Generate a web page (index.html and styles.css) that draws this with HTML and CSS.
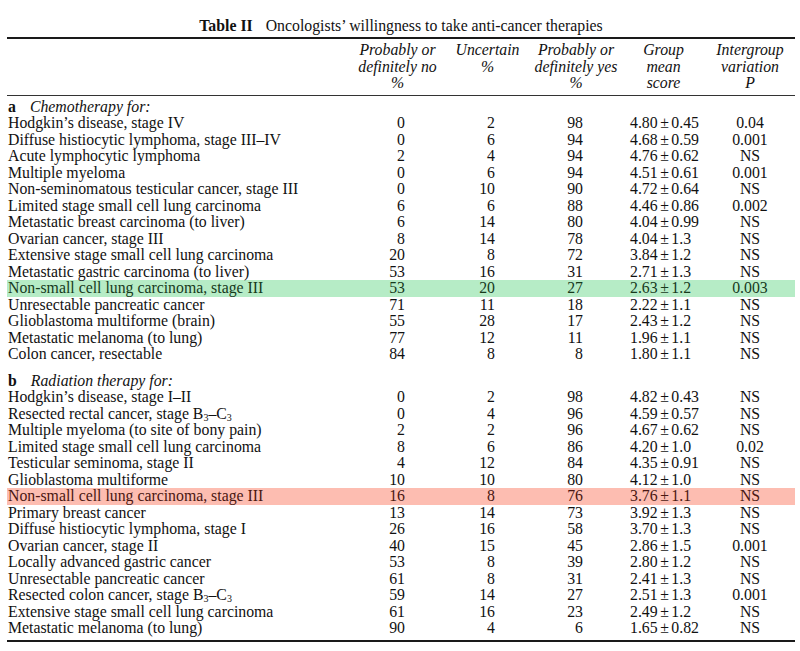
FILE: index.html
```html
<!DOCTYPE html>
<html>
<head>
<meta charset="utf-8">
<link rel="stylesheet" href="styles.css">
</head>
<body>
<div class="page">
  <div class="title"><b>Table II</b><span class="title-text">Oncologists’ willingness to take anti-cancer therapies</span></div>
  <table class="tbl">
    <colgroup>
      <col class="c-label"><col class="c-no"><col class="c-unc"><col class="c-yes"><col class="c-mean"><col class="c-p">
    </colgroup>
    <thead>
      <tr>
        <th></th>
        <th>Probably or<br>definitely no<br>%</th>
        <th>Uncertain<br>%</th>
        <th>Probably or<br>definitely yes<br>%</th>
        <th>Group<br>mean<br>score</th>
        <th>Intergroup<br>variation<br>P</th>
      </tr>
    </thead>
    <tbody>
      <tr class="sec"><td colspan="6"><b>a</b><i>Chemotherapy for:</i></td></tr>
      <tr><td>Hodgkin’s disease, stage IV</td><td>0</td><td>2</td><td>98</td><td>4.80<span class="pm">±</span>0.45</td><td>0.04</td></tr>
      <tr><td>Diffuse histiocytic lymphoma, stage III–IV</td><td>0</td><td>6</td><td>94</td><td>4.68<span class="pm">±</span>0.59</td><td>0.001</td></tr>
      <tr><td>Acute lymphocytic lymphoma</td><td>2</td><td>4</td><td>94</td><td>4.76<span class="pm">±</span>0.62</td><td>NS</td></tr>
      <tr><td>Multiple myeloma</td><td>0</td><td>6</td><td>94</td><td>4.51<span class="pm">±</span>0.61</td><td>0.001</td></tr>
      <tr><td>Non-seminomatous testicular cancer, stage III</td><td>0</td><td>10</td><td>90</td><td>4.72<span class="pm">±</span>0.64</td><td>NS</td></tr>
      <tr><td>Limited stage small cell lung carcinoma</td><td>6</td><td>6</td><td>88</td><td>4.46<span class="pm">±</span>0.86</td><td>0.002</td></tr>
      <tr><td>Metastatic breast carcinoma (to liver)</td><td>6</td><td>14</td><td>80</td><td>4.04<span class="pm">±</span>0.99</td><td>NS</td></tr>
      <tr><td>Ovarian cancer, stage III</td><td>8</td><td>14</td><td>78</td><td>4.04<span class="pm">±</span>1.3</td><td>NS</td></tr>
      <tr><td>Extensive stage small cell lung carcinoma</td><td>20</td><td>8</td><td>72</td><td>3.84<span class="pm">±</span>1.2</td><td>NS</td></tr>
      <tr><td>Metastatic gastric carcinoma (to liver)</td><td>53</td><td>16</td><td>31</td><td>2.71<span class="pm">±</span>1.3</td><td>NS</td></tr>
      <tr class="hl-green"><td>Non-small cell lung carcinoma, stage III</td><td>53</td><td>20</td><td>27</td><td>2.63<span class="pm">±</span>1.2</td><td>0.003</td></tr>
      <tr><td>Unresectable pancreatic cancer</td><td>71</td><td>11</td><td>18</td><td>2.22<span class="pm">±</span>1.1</td><td>NS</td></tr>
      <tr><td>Glioblastoma multiforme (brain)</td><td>55</td><td>28</td><td>17</td><td>2.43<span class="pm">±</span>1.2</td><td>NS</td></tr>
      <tr><td>Metastatic melanoma (to lung)</td><td>77</td><td>12</td><td>11</td><td>1.96<span class="pm">±</span>1.1</td><td>NS</td></tr>
      <tr><td>Colon cancer, resectable</td><td>84</td><td>8</td><td>8</td><td>1.80<span class="pm">±</span>1.1</td><td>NS</td></tr>
      <tr class="sec sec-b"><td colspan="6"><b>b</b><i>Radiation therapy for:</i></td></tr>
      <tr><td>Hodgkin’s disease, stage I–II</td><td>0</td><td>2</td><td>98</td><td>4.82<span class="pm">±</span>0.43</td><td>NS</td></tr>
      <tr><td>Resected rectal cancer, stage B<sub>3</sub>–C<sub>3</sub></td><td>0</td><td>4</td><td>96</td><td>4.59<span class="pm">±</span>0.57</td><td>NS</td></tr>
      <tr><td>Multiple myeloma (to site of bony pain)</td><td>2</td><td>2</td><td>96</td><td>4.67<span class="pm">±</span>0.62</td><td>NS</td></tr>
      <tr><td>Limited stage small cell lung carcinoma</td><td>8</td><td>6</td><td>86</td><td>4.20<span class="pm">±</span>1.0</td><td>0.02</td></tr>
      <tr><td>Testicular seminoma, stage II</td><td>4</td><td>12</td><td>84</td><td>4.35<span class="pm">±</span>0.91</td><td>NS</td></tr>
      <tr><td>Glioblastoma multiforme</td><td>10</td><td>10</td><td>80</td><td>4.12<span class="pm">±</span>1.0</td><td>NS</td></tr>
      <tr class="hl-red"><td>Non-small cell lung carcinoma, stage III</td><td>16</td><td>8</td><td>76</td><td>3.76<span class="pm">±</span>1.1</td><td>NS</td></tr>
      <tr><td>Primary breast cancer</td><td>13</td><td>14</td><td>73</td><td>3.92<span class="pm">±</span>1.3</td><td>NS</td></tr>
      <tr><td>Diffuse histiocytic lymphoma, stage I</td><td>26</td><td>16</td><td>58</td><td>3.70<span class="pm">±</span>1.3</td><td>NS</td></tr>
      <tr><td>Ovarian cancer, stage II</td><td>40</td><td>15</td><td>45</td><td>2.86<span class="pm">±</span>1.5</td><td>0.001</td></tr>
      <tr><td>Locally advanced gastric cancer</td><td>53</td><td>8</td><td>39</td><td>2.80<span class="pm">±</span>1.2</td><td>NS</td></tr>
      <tr><td>Unresectable pancreatic cancer</td><td>61</td><td>8</td><td>31</td><td>2.41<span class="pm">±</span>1.3</td><td>NS</td></tr>
      <tr><td>Resected colon cancer, stage B<sub>3</sub>–C<sub>3</sub></td><td>59</td><td>14</td><td>27</td><td>2.51<span class="pm">±</span>1.3</td><td>0.001</td></tr>
      <tr><td>Extensive stage small cell lung carcinoma</td><td>61</td><td>16</td><td>23</td><td>2.49<span class="pm">±</span>1.2</td><td>NS</td></tr>
      <tr class="last"><td>Metastatic melanoma (to lung)</td><td>90</td><td>4</td><td>6</td><td>1.65<span class="pm">±</span>0.82</td><td>NS</td></tr>
    </tbody>
  </table>
</div>
</body>
</html>
```
FILE: styles.css
```css
html, body {
  margin: 0;
  padding: 0;
  background: #ffffff;
}

.page {
  width: 788px;
  margin-left: 7px;
  padding-top: 17px;
  font-family: "Liberation Serif", "Times New Roman", serif;
  font-size: 15.8px;
  color: #111111;
}

.title {
  text-align: center;
  line-height: 18px;
  height: 20px;
}

.title b {
  font-weight: bold;
}

.title-text {
  margin-left: 13px;
}

.tbl {
  width: 788px;
  border-collapse: collapse;
  table-layout: fixed;
}

.c-label { width: 343px; }
.c-no { width: 95px; }
.c-unc { width: 85px; }
.c-yes { width: 92px; }
.c-mean { width: 83px; }
.c-p { width: 90px; }

.tbl thead th {
  font-weight: normal;
  font-style: italic;
  text-align: center;
  vertical-align: top;
  line-height: 16.5px;
  padding: 3px 0 3px 0;
  border-top: 2px solid #1a1a1a;
  border-bottom: 1.5px solid #333;
}

.tbl tbody td {
  padding: 0;
  height: 16.5px;
  line-height: 16.5px;
  white-space: nowrap;
}

.tbl tbody td:first-child {
  padding-left: 1px;
  text-align: left;
}

.tbl tbody td:nth-child(2) { text-align: right; padding-right: 40px; }
.tbl tbody td:nth-child(3) { text-align: right; padding-right: 35px; }
.tbl tbody td:nth-child(4) { text-align: right; padding-right: 39px; }
.tbl tbody td:nth-child(5) { text-align: left; padding-left: 8px; }
.tbl tbody td:nth-child(6) { text-align: center; padding-left: 0; }

.pm {
  margin: 0 2.5px;
}

.tbl tbody tr.sec td {
  padding-top: 3px;
  text-align: left;
}

.tbl tbody tr.sec b {
  font-weight: bold;
  margin-right: 14px;
}

.tbl tbody tr.sec-b td {
  padding-top: 10px;
}

.tbl tbody tr.last td {
  padding-bottom: 3px;
  border-bottom: 2px solid #1a1a1a;
}

.tbl sub {
  font-size: 10px;
  line-height: 0;
  vertical-align: -2px;
}

.hl-green td {
  background: #b6ecc6;
  color: #163a1c;
}

.hl-red td {
  background: #fdbdb1;
  color: #4a1712;
}
```
